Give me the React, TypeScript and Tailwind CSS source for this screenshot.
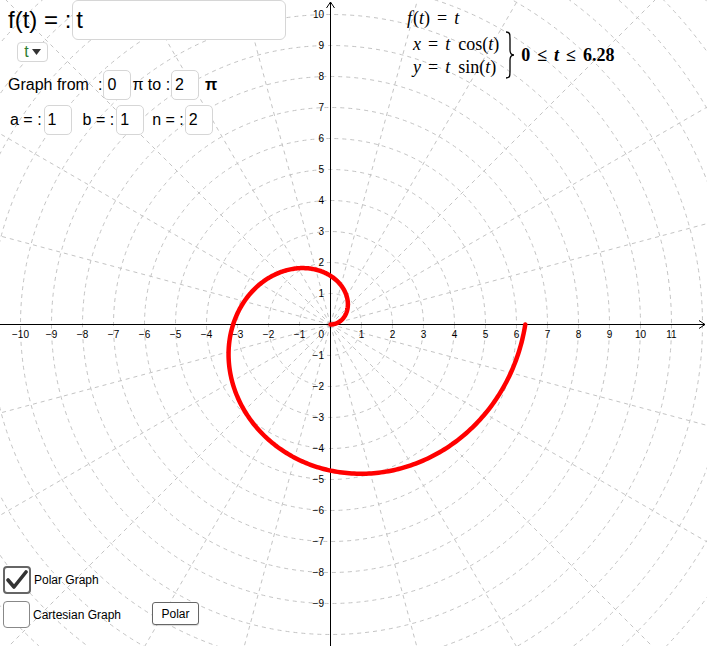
import React from 'react';

const OX = 330.5;
const OY = 324.5;
const U = 31;

const rings = Array.from({ length: 16 }, (_, i) => i + 1);
const spokes = Array.from({ length: 24 }, (_, i) => i * 15).filter((a) => a % 90 !== 0);
const xLabels = Array.from({ length: 22 }, (_, i) => i - 10).filter((k) => k !== 0);
const yLabels = Array.from({ length: 20 }, (_, i) => i - 9).filter((k) => k !== 0);

const fmt = (k: number) => (k < 0 ? `\u2212${-k}` : `${k}`);

// r = t, 0 <= t <= 2π
const spiral = (() => {
  const pts: string[] = [];
  const steps = 400;
  for (let i = 0; i <= steps; i++) {
    const t = (Math.PI * 2 * i) / steps;
    const x = OX + U * t * Math.cos(t);
    const y = OY - U * t * Math.sin(t);
    pts.push(`${x.toFixed(2)},${y.toFixed(2)}`);
  }
  return pts.join(' ');
})();

function Graph() {
  return (
    <svg className="absolute inset-0" width={707} height={646} viewBox="0 0 707 646">
      {/* polar grid */}
      <g stroke="#c4c4c4" strokeWidth={1} strokeDasharray="4 4" fill="none">
        {rings.map((k) => (
          <circle key={k} cx={OX} cy={OY} r={k * U} />
        ))}
        {spokes.map((a) => {
          const r = (a * Math.PI) / 180;
          return (
            <line
              key={a}
              x1={OX}
              y1={OY}
              x2={OX + 600 * Math.cos(r)}
              y2={OY - 600 * Math.sin(r)}
            />
          );
        })}
      </g>

      {/* axes */}
      <g stroke="#000" strokeWidth={1} fill="none">
        <line x1={0} y1={OY} x2={705} y2={OY} />
        <polyline points={`699,${OY - 4} 705,${OY} 699,${OY + 4}`} />
        <line x1={OX} y1={646} x2={OX} y2={2} />
        <polyline points={`${OX - 4},8 ${OX},2 ${OX + 4},8`} />
      </g>

      {/* labels */}
      <g fontFamily="'Liberation Sans', Arial, sans-serif" fontSize={10} fill="#000">
        {xLabels.map((k) => (
          <text key={k} x={OX + k * U} y={338} textAnchor="middle">
            {fmt(k)}
          </text>
        ))}
        <text x={324} y={338} textAnchor="end">
          0
        </text>
        {yLabels.map((k) => (
          <text key={k} x={324} y={OY - k * U + 3.5} textAnchor="end">
            {fmt(k)}
          </text>
        ))}
      </g>

      {/* curve */}
      <polyline
        points={spiral}
        fill="none"
        stroke="#ff0000"
        strokeWidth={4.5}
        strokeLinecap="round"
        strokeLinejoin="round"
      />
    </svg>
  );
}

function Box({ value, className = '' }: { value: string; className?: string }) {
  return (
    <div
      className={`h-[30px] w-[28px] rounded-[5px] border border-[#d6d6d6] bg-white pl-[3px] flex items-center text-[16px] ${className}`}
    >
      {value}
    </div>
  );
}

function Formula() {
  const mi = "italic";
  return (
    <div className="absolute left-[407px] top-[8px] font-['Liberation_Serif',serif] text-[18px] text-black leading-none">
      <div className="h-[20px] flex items-center">
        <span className={mi}>f</span>
        <span className="ml-[1px]">(</span>
        <span className={mi}>t</span>)
        <span className="mx-[7px]">=</span>
        <span className={mi}>t</span>
      </div>
      <div className="flex items-center mt-[3px]">
        <div className="flex flex-col gap-[4px] pl-[6px]">
          <div className="h-[19px] flex items-center">
            <span className={mi}>x</span>
            <span className="mx-[7px]">=</span>
            <span className={mi}>t</span>
            <span className="ml-[8px]">cos(</span>
            <span className={mi}>t</span>)
          </div>
          <div className="h-[19px] flex items-center">
            <span className={mi}>y</span>
            <span className="mx-[7px]">=</span>
            <span className={mi}>t</span>
            <span className="ml-[8px]">sin(</span>
            <span className={mi}>t</span>)
          </div>
        </div>
        <svg width={12} height={48} viewBox="0 0 12 48" className="ml-[5px]">
          <path
            d="M2 1 C6 1 6 3 6 8 L6 19 C6 22 7 24 10 24 C7 24 6 26 6 29 L6 40 C6 45 6 47 2 47"
            fill="none"
            stroke="#000"
            strokeWidth={1.3}
          />
        </svg>
        <div className="ml-[5px] font-bold flex items-center">
          0<span className="mx-[7px]">≤</span>
          <span className={mi}>t</span>
          <span className="mx-[7px]">≤</span>6.28
        </div>
      </div>
    </div>
  );
}

export default function App() {
  return (
    <div className="relative w-[707px] h-[646px] overflow-hidden bg-white font-['Liberation_Sans',Arial,sans-serif] text-black">
      <Graph />

      {/* function input */}
      <div className="absolute left-[8px] top-0 h-[40px] flex items-center">
        <span className="text-[24px] leading-none">f(t) = :</span>
        <div className="ml-[1px] h-[40px] w-[214px] rounded-[6px] border border-[#d6d6d6] bg-white pl-[3px] flex items-center text-[24px]">
          t
        </div>
      </div>

      {/* variable dropdown */}
      <div className="absolute left-[17px] top-[42px] h-[20px] w-[31px] rounded-[4px] border border-[#d6d6d6] bg-white flex items-center justify-center gap-[3px]">
        <span className="text-[16px] leading-none text-[#2e7d32]">t</span>
        <svg width={9} height={6} viewBox="0 0 9 6">
          <path d="M0 0 L9 0 L4.5 6 Z" fill="#333" />
        </svg>
      </div>

      {/* range */}
      <div className="absolute left-[8px] top-[69px] h-[31px] flex items-center text-[16px]">
        <span>Graph from</span>
        <span className="ml-[9px] mr-[1px]">:</span>
        <Box value="0" />
        <span className="ml-[1px]">π to :</span>
        <Box value="2" className="ml-[1px]" />
        <span className="ml-[6px] font-bold">π</span>
      </div>

      {/* parameters */}
      <div className="absolute left-[10px] top-[105px] h-[30px] flex items-center text-[16px]">
        <span>a = :</span>
        <Box value="1" className="ml-[2px]" />
        <span className="ml-[11px]">b = :</span>
        <Box value="1" className="ml-[2px]" />
        <span className="ml-[8px]">n = :</span>
        <Box value="2" className="ml-[1px]" />
      </div>

      {/* checkboxes */}
      <div className="absolute left-[3px] top-[566px] flex flex-col gap-[7px] text-[12px]">
        <div className="flex items-center">
          <div className="h-[28px] w-[28px] rounded-[4px] border-2 border-[#666] bg-white flex items-center justify-center">
            <svg width={22} height={20} viewBox="0 0 22 20">
              <path d="M2 10 L8 17 L20 2" fill="none" stroke="#333" strokeWidth={3.6} strokeLinecap="round" strokeLinejoin="round" />
            </svg>
          </div>
          <span className="ml-[3px]">Polar Graph</span>
        </div>
        <div className="flex items-center">
          <div className="h-[27px] w-[27px] rounded-[4px] border border-[#888] bg-white" />
          <span className="ml-[3px]">Cartesian Graph</span>
        </div>
      </div>

      <button className="absolute left-[152px] top-[602px] h-[23px] w-[47px] rounded-[3px] border border-[#666] bg-white text-[12px] shadow-[0_1px_1px_rgba(0,0,0,0.15)]">
        Polar
      </button>

      <Formula />
    </div>
  );
}
